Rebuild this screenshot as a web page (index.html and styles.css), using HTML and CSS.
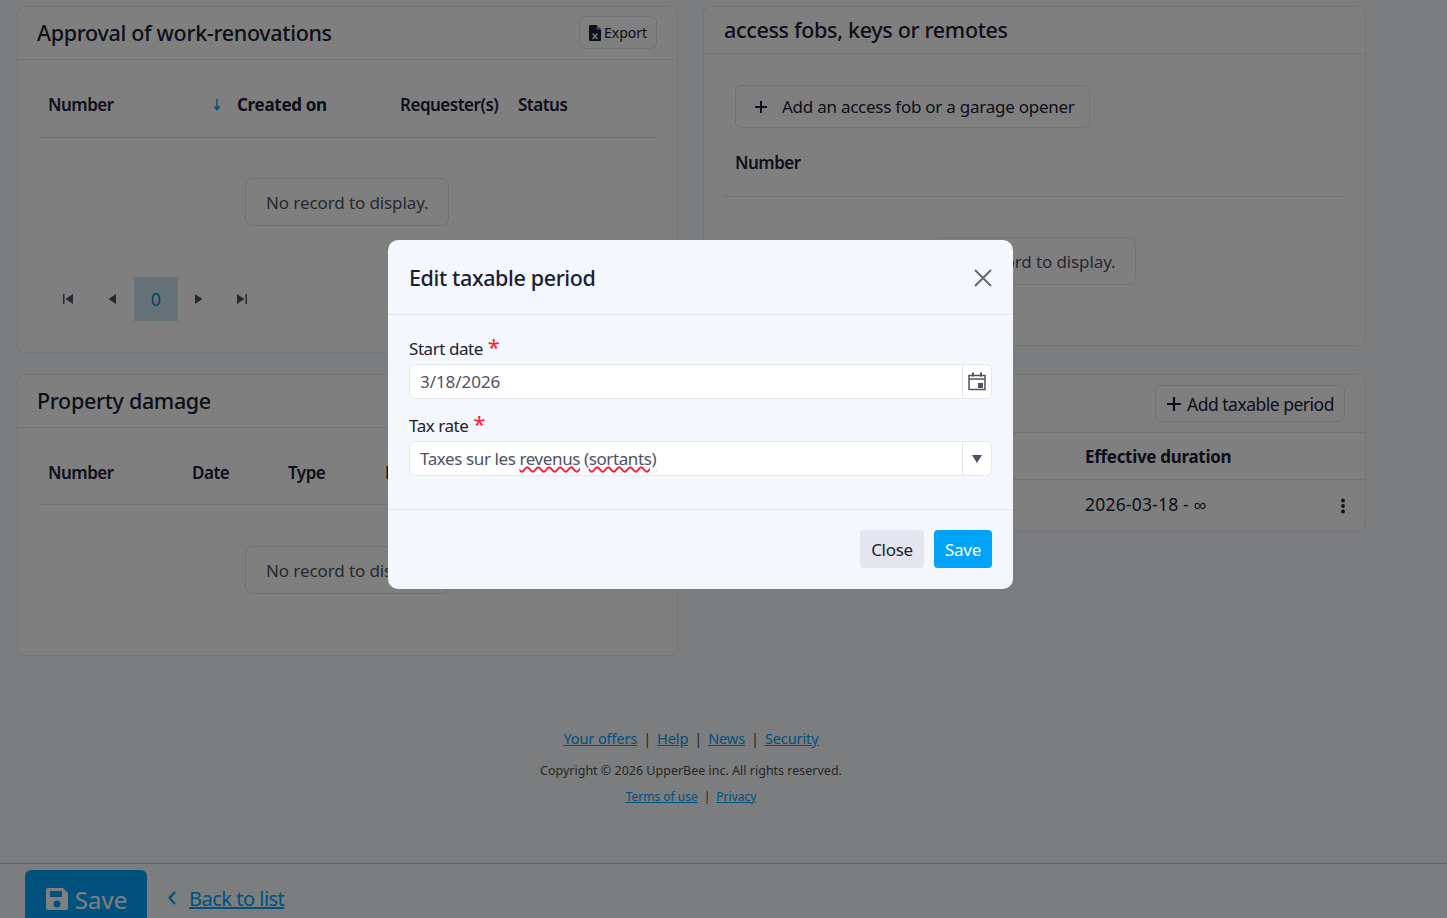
FILE: index.html
```html
<!DOCTYPE html>
<html lang="en">
<head>
  <meta charset="UTF-8">
  <title>Edit taxable period</title>
  <link rel="stylesheet" href="styles.css">
</head>
<body>
  <main class="page">
    <div class="cards">

      <section class="card card-approval">
        <header class="card-head">
          <h2>Approval of work-renovations</h2>
          <button class="btn btn-export">
            <svg class="file-icon" viewBox="0 0 12 16" width="12" height="16">
              <path d="M1 0h6.5L12 4.5V15a1 1 0 0 1-1 1H1a1 1 0 0 1-1-1V1a1 1 0 0 1 1-1z" fill="#1a2035"/>
              <path d="M7.5 0v4.5H12z" fill="#8a8a8a"/>
              <path d="M3.6 8.5l4.8 5.5M8.4 8.5l-4.8 5.5" stroke="#fff" stroke-width="1.3"/>
            </svg>
            Export
          </button>
        </header>
        <div class="table-head cols-approval">
          <span>Number</span>
          <span class="sorted">
            <svg class="sort-icon" viewBox="0 0 10 14" width="10" height="14">
              <path d="M5 1v10" stroke="#00a3fa" stroke-width="1.4"/>
              <path d="M1.5 8.5h7L5 13z" fill="#00a3fa"/>
            </svg>
            <b>Created on</b>
          </span>
          <span>Requester(s)</span>
          <span>Status</span>
        </div>
        <div class="empty-wrap"><div class="empty">No record to display.</div></div>
        <nav class="pager">
          <a><svg viewBox="0 0 12 12" width="12" height="12"><path d="M1 1h1.5v10H1zM11 1v10L3.5 6z"/></svg></a>
          <a><svg viewBox="0 0 12 12" width="12" height="12"><path d="M10 1v10L2.5 6z"/></svg></a>
          <a class="current">0</a>
          <a class="next"><svg viewBox="0 0 12 12" width="12" height="12"><path d="M2 1v10l7.5-5z"/></svg></a>
          <a><svg viewBox="0 0 12 12" width="12" height="12"><path d="M1 1v10l7.5-5zM9.500 1H11v10H9.500z"/></svg></a>
        </nav>
      </section>

      <section class="card card-fobs">
        <header class="card-head head-small">
          <h2>access fobs, keys or remotes</h2>
        </header>
        <div class="add-row">
          <button class="btn btn-add-fob">
            <svg viewBox="0 0 14 14" width="14" height="14"><path d="M7 1v12M1 7h12" stroke="#1a2035" stroke-width="2"/></svg>
            Add an access fob or a garage opener
          </button>
        </div>
        <div class="table-head fob-head"><span>Number</span></div>
        <div class="empty-wrap"><div class="empty">No record to display.</div></div>
      </section>

      <section class="card card-damage">
        <header class="card-head">
          <h2>Property damage</h2>
        </header>
        <div class="table-head cols-damage">
          <span>Number</span>
          <span>Date</span>
          <span>Type</span>
          <span>Files</span>
        </div>
        <div class="empty-wrap"><div class="empty">No record to display.</div></div>
      </section>

      <section class="card card-periods">
        <header class="card-head head-periods">
          <h2>Taxable periods</h2>
          <button class="btn btn-add-period">
            <svg viewBox="0 0 16 16" width="16" height="16"><path d="M8 1v14M1 8h14" stroke="#1a2035" stroke-width="2.200"/></svg>
            Add taxable period
          </button>
        </header>
        <div class="period-row period-head">
          <span>Tax rate</span>
          <b>Effective duration</b>
        </div>
        <div class="period-row period-data">
          <span>Taxes sur les revenus (sortants)</span>
          <span class="duration">2026-03-18 - ∞</span>
          <svg class="dots" viewBox="0 0 4 16" width="4" height="16">
            <circle cx="2" cy="2.500" r="1.900"/><circle cx="2" cy="8" r="1.900"/><circle cx="2" cy="13.500" r="1.900"/>
          </svg>
        </div>
      </section>
    </div>

    <footer class="site-foot">
      <p class="foot-main"><a>Your offers</a><i>|</i><a>Help</a><i>|</i><a>News</a><i>|</i><a>Security</a></p>
      <p class="foot-copy">Copyright © 2026 UpperBee inc. All rights reserved.</p>
      <p class="foot-legal"><a>Terms of use</a><i>|</i><a>Privacy</a></p>
    </footer>
  </main>

  <div class="action-bar">
    <button class="btn-save-page">
      <svg viewBox="0 0 24 24" width="24" height="24">
        <path fill-rule="evenodd" d="M3 1h15l5 5v15a2 2 0 0 1-2 2H3a2 2 0 0 1-2-2V3a2 2 0 0 1 2-2zm2 3v6h12V4zm7 9.500a3.500 3.500 0 1 0 0 7 3.500 3.500 0 0 0 0-7z" fill="#fff"/>
      </svg>
      Save
    </button>
    <svg class="back-icon" viewBox="0 0 10 16" width="10" height="16"><path d="M8 2L2.500 8 8 14" fill="none" stroke="#00a3fa" stroke-width="2.200"/></svg>
    <a class="back-link">Back to list</a>
  </div>

  <div class="backdrop">
    <div class="modal">
      <div class="modal-head">
        <h3>Edit taxable period</h3>
        <svg class="modal-x" viewBox="0 0 20 20" width="20" height="20"><path d="M2 2l16 16M18 2L2 18" stroke="#666a70" stroke-width="2"/></svg>
      </div>
      <div class="modal-body">
        <label class="field-label">Start date <em>*</em></label>
        <div class="field">
          <span class="field-value date-value">3/18/2026</span>
          <span class="field-addon">
            <svg class="calendar" viewBox="0 0 18 20" width="18" height="20">
              <path d="M1 4.500h16v14H1zM1 8h16" fill="none" stroke="#4f5166" stroke-width="1.500"/>
              <path d="M4 1.500h2v4H4zM12 1.500h2v4h-2zM10 12h5v5h-5z" fill="#4f5166"/>
            </svg>
          </span>
        </div>
        <label class="field-label">Tax rate <em>*</em></label>
        <div class="field">
          <span class="field-value">Taxes sur les <u>revenus</u> (<u>sortants)</u></span>
          <span class="field-addon">
            <svg viewBox="0 0 10 8" width="10" height="8"><path d="M0 0h10L5 8z" fill="#4f5166"/></svg>
          </span>
        </div>
      </div>
      <div class="modal-foot">
        <button class="btn-close">Close</button>
        <button class="btn-save">Save</button>
      </div>
    </div>
  </div>
</body>
</html>
```

FILE: styles.css
```css
* {
  box-sizing: border-box;
}

html, body {
  height: 918px;
  margin: 0;
  overflow: hidden;
}

body {
  display: flex;
  flex-direction: column;
  font-family: "Noto Sans", sans-serif;
  font-size: 17px;
  color: #1a2035;
  background: #f8fafc;
}

button {
  font-family: inherit;
  color: inherit;
  white-space: nowrap;
}

.page {
  flex: 1;
  padding: 6px 82px 0 17px;
  overflow: hidden;
}

.cards {
  display: grid;
  grid-template-columns: 661px 663px;
  column-gap: 25px;
  row-gap: 21px;
  align-items: start;
  grid-template-rows: 347px auto;
}

.card {
  background: #fff;
  border: 1px solid #eaedf2;
  border-radius: 8px;
}

.card-approval {
  height: 347px;
}

.card-fobs {
  height: 340px;
}

.card-damage {
  height: 282px;
}

.card-head {
  display: flex;
  align-items: center;
  justify-content: space-between;
  height: 53px;
  padding: 0 20px;
  border-bottom: 1px solid #e4e7ee;
}

.card-head h2 {
  margin: 0 0 2px;
  font-size: 21.500px;
  font-weight: 500;
  letter-spacing: -0.33px;
}

.card-approval h2,
.card-damage h2 {
  margin-left: -1px;
}

.head-small {
  height: 47px;
}

.head-periods {
  height: 58px;
}

.btn {
  display: inline-flex;
  align-items: center;
  background: #fff;
  border: 1px solid #e4e7ee;
  border-radius: 6px;
}

.btn svg {
  flex: none;
}

.btn-export {
  height: 33px;
  width: 78px;
  padding: 0 9px;
  gap: 3px;
  font-size: 14px;
  margin-top: -1px;
}

.table-head {
  display: grid;
  align-items: center;
  margin: 0 20px;
  padding-left: 10px;
  font-weight: 600;
  letter-spacing: -0.5px;
  border-bottom: 1px solid #e4e7ee;
}

.table-head b {
  font-weight: 700;
  letter-spacing: -0.3px;
}

.cols-approval {
  grid-template-columns: 162px 190px 118px 1fr;
  height: 78px;
  padding-top: 12px;
}

.sorted {
  display: flex;
  align-items: center;
  gap: 15px;
  padding-left: 2px;
}

.sort-icon {
  flex: none;
}

.cols-damage {
  grid-template-columns: 144px 96px 97px 1fr;
  height: 77px;
  padding-top: 12px;
}

.card-damage .empty-wrap {
  padding-top: 41px;
}

.fob-head {
  height: 69px;
  padding-left: 11px;
}

.empty-wrap {
  display: flex;
  justify-content: center;
  padding: 40px 1px 0 0;
}

.empty {
  height: 48px;
  padding: 0 20px;
  width: 204px;
  display: flex;
  align-items: center;
  white-space: nowrap;
  font-size: 17px;
  letter-spacing: -0.1px;
  color: #4f5166;
  border: 1px solid #e4e7ee;
  border-radius: 8px;
}

.pager {
  display: flex;
  margin: 51px 0 0 28px;
}

.pager a {
  display: flex;
  align-items: center;
  justify-content: center;
  width: 44px;
  height: 44px;
  fill: #4f5166;
}

.pager .next {
  width: 42px;
}

.pager .current {
  background: #cde1ef;
  color: #0a86c8;
  font-size: 18px;
}

.add-row {
  padding: 31px 0 0 31px;
}

.btn-add-fob {
  width: 355px;
  height: 43px;
  padding: 0 15px 0 18px;
  gap: 14px;
  font-size: 17px;
  letter-spacing: -0.25px;
}

.btn-add-period {
  width: 190px;
  height: 37px;
  padding: 0 10px;
  gap: 5px;
  font-size: 17.500px;
  letter-spacing: -0.5px;
}

.period-row {
  display: grid;
  grid-template-columns: 361px 1fr 24px;
  align-items: center;
  padding-left: 20px;
  border-bottom: 1px solid #e4e7ee;
}

.period-head {
  height: 47px;
}

.period-head b {
  font-weight: 700;
  letter-spacing: -0.3px;
}

.period-data {
  height: 50px;
  border-bottom: 0;
}

.duration {
  font-size: 17.500px;
  letter-spacing: 0.2px;
  padding-bottom: 3px;
}

.dots {
  fill: #1a2035;
  margin-top: 2px;
}

.site-foot {
  margin-top: 72px;
  text-align: center;
  color: #4f4f4f;
}

.site-foot p {
  margin: 0;
}

.site-foot a {
  color: #00a3fa;
  text-decoration: underline;
}

.site-foot i {
  font-style: normal;
  margin: 0 6px;
}

.foot-main {
  font-size: 14.500px;
  line-height: 20px;
  letter-spacing: -0.1px;
}

.site-foot .foot-copy {
  font-size: 12.500px;
  line-height: 18px;
  margin-top: 14px;
}

.site-foot .foot-legal {
  font-size: 12px;
  line-height: 18px;
  margin-top: 8px;
}

.action-bar {
  flex: none;
  display: flex;
  align-items: flex-start;
  height: 55px;
  padding: 6px 25px 0;
  background: #f8fafc;
  border-top: 1px solid #c6c9cc;
}

.btn-save-page {
  display: flex;
  align-items: center;
  justify-content: center;
  gap: 6px;
  width: 122px;
  height: 58px;
  border: 0;
  border-radius: 6px;
  background: #00a3fa;
  color: #fff;
  font-size: 24px;
  padding: 0;
}

.back-icon {
  margin: 20px 12px 0 20px;
}

.back-link {
  margin-top: 15px;
  font-size: 20px;
  letter-spacing: -0.5px;
  color: #00a3fa;
  text-decoration: underline;
}

/* modal */
.backdrop {
  position: fixed;
  inset: 0;
  background: rgba(0, 0, 0, 0.5);
}

.modal {
  position: absolute;
  left: 388px;
  top: 240px;
  width: 625px;
  height: 349px;
  background: #f4f7fb;
  border-radius: 10px;
}

.modal-head {
  display: flex;
  align-items: center;
  justify-content: space-between;
  height: 75px;
  padding: 0 20px 0 21px;
  border-bottom: 1px solid #e4e7ee;
}

.modal-head h3 {
  margin: 0;
  font-size: 21.500px;
  font-weight: 500;
  letter-spacing: -0.37px;
}

.modal-x {
  margin-top: 2px;
}

.modal-body {
  height: 195px;
  padding: 21px 21px 0 21px;
  border-bottom: 1px solid #e4e7ee;
}

.field-label {
  display: block;
  height: 28px;
  line-height: 26px;
  font-size: 17px;
  letter-spacing: -0.45px;
}

.field-label em {
  font-style: normal;
  color: #ff1a35;
  font-size: 22px;
  line-height: 20px;
  margin-left: 1px;
}

.field {
  display: flex;
  height: 35px;
  margin-bottom: 14px;
  background: #fff;
  border: 1px solid #e4e7ee;
  border-radius: 6px;
}

.field-value {
  flex: 1;
  padding-left: 10px;
  line-height: 33px;
  font-size: 17px;
  letter-spacing: -0.4px;
  color: #4f5166;
}

.date-value {
  letter-spacing: -0.05px;
}

.field-value u {
  text-decoration: underline wavy #ff1a35 1.500px;
}

.field-addon {
  display: flex;
  align-items: center;
  justify-content: center;
  width: 29px;
  border-left: 1px solid #e4e7ee;
}

.calendar {
  margin-top: -2px;
}

.modal-foot {
  display: flex;
  justify-content: flex-end;
  gap: 10px;
  padding: 20px 21px 0 0;
}

.btn-close,
.btn-save {
  height: 38px;
  border: 0;
  border-radius: 4px;
  font-size: 17px;
  letter-spacing: -0.3px;
  padding: 0;
}

.btn-close {
  width: 64px;
  background: #e3e6ee;
}

.btn-save {
  width: 58px;
  background: #00a3fa;
  color: #fff;
}
```
